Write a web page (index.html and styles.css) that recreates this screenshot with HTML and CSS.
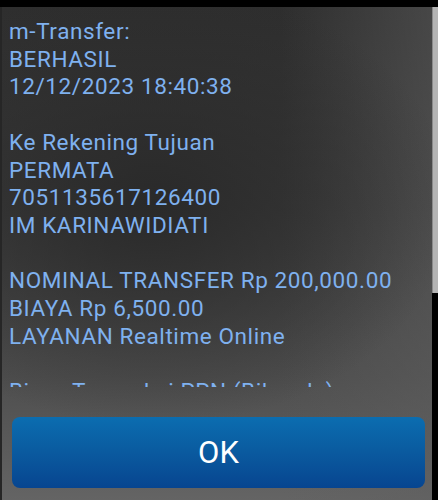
FILE: index.html
```html
<!DOCTYPE html>
<html>
<head>
<meta charset="utf-8">
<link rel="stylesheet" href="styles.css">
</head>
<body>
<div class="screen">
  <div class="edge-left"></div>
  <div class="dialog">
    <div class="message">
      <p>m-Transfer:</p>
      <p>BERHASIL</p>
      <p>12/12/2023 18:40:38</p>
      <p class="blank">&nbsp;</p>
      <p>Ke Rekening Tujuan</p>
      <p>PERMATA</p>
      <p>7051135617126400</p>
      <p>IM KARINAWIDIATI</p>
      <p class="blank">&nbsp;</p>
      <p>NOMINAL TRANSFER Rp 200,000.00</p>
      <p>BIAYA Rp 6,500.00</p>
      <p>LAYANAN Realtime Online</p>
      <p class="blank">&nbsp;</p>
      <p>Biaya Transaksi PPN (Bila ada)</p>
    </div>
    <div class="actions">
      <button class="ok">OK</button>
    </div>
  </div>
  <div class="scrollbar">
    <div class="thumb"></div>
  </div>
</div>
</body>
</html>
```

FILE: styles.css
```css
html, body {
  margin: 0;
  padding: 0;
  background: #000;
}
body {
  width: 438px;
  height: 500px;
  overflow: hidden;
  font-family: Roboto, "Liberation Sans", sans-serif;
}
.screen {
  display: flex;
  height: 500px;
  padding-top: 7px;
  box-sizing: border-box;
}
.edge-left {
  width: 2px;
  background: #262626;
}
.dialog {
  flex: 1;
  display: flex;
  flex-direction: column;
  background:
    radial-gradient(ellipse 70% 45% at 35% 40%, rgba(40,40,40,0.9) 0%, rgba(40,40,40,0) 100%),
    linear-gradient(to left, rgba(95,95,95,0.5) 0%, rgba(95,95,95,0) 35%),
    linear-gradient(to bottom, #2e2e2e 0%, #3a3a3a 40%, #4e4e4e 75%, #646464 100%);
}
.message {
  height: 380px;
  overflow: hidden;
  padding: 11px 7px 0;
  box-sizing: border-box;
  color: #7fb1ef;
  font-size: 22.5px;
  letter-spacing: 0.6px;
  line-height: 27.7px;
}
.message p {
  margin: 0;
  white-space: nowrap;
}
.actions {
  padding: 30px 7px 12px 10px;
}
.ok {
  display: block;
  width: 100%;
  height: 71px;
  border: none;
  border-radius: 8px;
  background: linear-gradient(to bottom, #0b6db0 0%, #0a5a9f 50%, #074590 100%);
  color: #fff;
  font-family: Roboto, "Liberation Sans", sans-serif;
  font-size: 31px;
  padding: 0;
}
.scrollbar {
  width: 6px;
  display: flex;
  flex-direction: column;
  background: #000;
}
.thumb {
  height: 286px;
  background: #b4b4b4;
  border-left: 1px solid #8a8a8a;
  box-sizing: border-box;
}
```
